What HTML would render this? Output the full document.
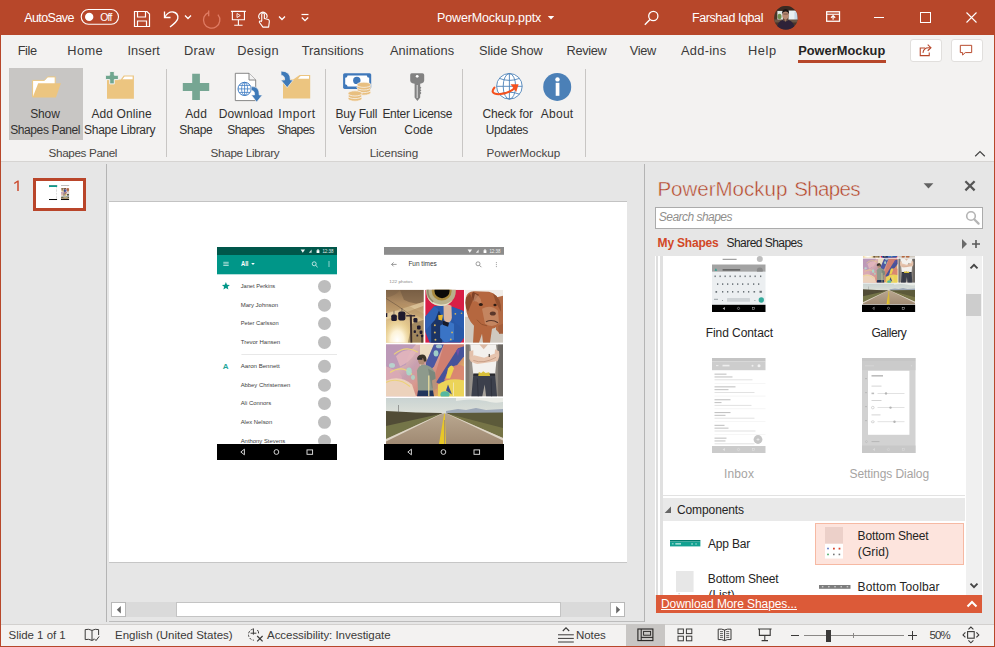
<!DOCTYPE html>
<html><head><meta charset="utf-8"><title>PowerMockup.pptx - PowerPoint</title>
<style>
html,body{margin:0;padding:0;}
body{width:995px;height:647px;overflow:hidden;position:relative;background:#e6e6e6;font-family:"Liberation Sans",sans-serif;}
.a{position:absolute;}
.t{position:absolute;white-space:nowrap;font-family:"Liberation Sans",sans-serif;}
svg{position:absolute;overflow:visible;}
#titlebar{left:0;top:0;width:995px;height:35px;background:#b7472a;}
#tabs{left:0;top:35px;width:995px;height:31px;background:#f3f2f1;}
#ribbon{left:0;top:66px;width:995px;height:95px;background:#f3f2f1;border-bottom:1px solid #d6d4d2;}
#status{left:0;top:624px;width:995px;height:22px;background:#f3f2f1;border-top:1px solid #d2d0ce;}
.sep{width:1px;background:#c8c6c4;top:69px;height:88px;}
#leftpane{left:0;top:162px;width:106px;height:461px;background:#e6e6e6;}
#slide{left:109px;top:201px;width:518px;height:360px;background:#fff;border-top:1px solid #c3c3c3;border-bottom:1px solid #c6c6c6;}
.frame{border-left:1px solid #b7472a;border-right:1px solid #b7472a;border-bottom:1px solid #b7472a;left:0;top:0;width:993px;height:646px;pointer-events:none;}

</style></head>
<body>
<svg width="0" height="0" style="position:absolute;left:0;top:0;">
<defs>
<linearGradient id="gSky" x1="0" y1="0" x2="0" y2="1">
 <stop offset="0" stop-color="#86694a"/><stop offset="0.3" stop-color="#b8946a"/><stop offset="0.6" stop-color="#dcc08c"/><stop offset="1" stop-color="#d8b87c"/>
</linearGradient>
<radialGradient id="gSun" cx="0.3" cy="0.95" r="0.5">
 <stop offset="0" stop-color="#ffffff"/><stop offset="0.35" stop-color="#fff6dc" stop-opacity="0.95"/><stop offset="0.7" stop-color="#f3dc9a" stop-opacity="0.5"/><stop offset="1" stop-color="#d8b578" stop-opacity="0"/>
</radialGradient>
<linearGradient id="gRoadSky" x1="0" y1="0" x2="0" y2="1">
 <stop offset="0" stop-color="#c9d3d2"/><stop offset="0.5" stop-color="#e6e6dc"/><stop offset="1" stop-color="#f3f0e6"/>
</linearGradient>
<linearGradient id="gRoad" x1="0" y1="0" x2="0" y2="1">
 <stop offset="0" stop-color="#b9a78f"/><stop offset="1" stop-color="#a08a73"/>
</linearGradient>
<linearGradient id="gGraf" x1="0" y1="0" x2="1" y2="0.6">
 <stop offset="0" stop-color="#c7a0b6"/><stop offset="0.3" stop-color="#dcb4b4"/><stop offset="0.45" stop-color="#c79fb0"/><stop offset="0.6" stop-color="#d99a90"/><stop offset="0.8" stop-color="#cf8272"/><stop offset="1" stop-color="#e6c85a"/>
</linearGradient>
<linearGradient id="gWall" x1="0" y1="0" x2="1" y2="0">
 <stop offset="0" stop-color="#8f8a84"/><stop offset="0.5" stop-color="#a8a39c"/><stop offset="1" stop-color="#77726c"/>
</linearGradient>

<!-- photo 1 : sky ride -->
<symbol id="ph1" viewBox="0 0 38 53" preserveAspectRatio="none">
 <rect width="38" height="53" fill="url(#gSky)"/>
 <path d="M14 0 L38 0 L38 12 Q28 16 18 10 Z" fill="#6e5540" opacity="0.55"/>
 <path d="M0 0 L14 0 Q10 6 0 8 Z" fill="#7b6148" opacity="0.5"/>
 <path d="M0 24 L38 12 L38 16 L0 30 Z" fill="#f3e2b8" opacity="0.55"/>
 <path d="M0 14 Q16 10 30 20 L38 24 L38 30 Q20 18 0 22 Z" fill="#b08c5c" opacity="0.35"/>
 <rect width="38" height="53" fill="url(#gSun)"/>
 <path d="M26 34 L38 30 L38 53 L22 53 Z" fill="#5a4630" opacity="0.45"/>
 <path d="M0 8.6 L12 16.2 L24.5 25" stroke="#4a3a30" stroke-width="0.4" fill="none"/>
 <path d="M23.9 25 L26 25 L26.4 53 L24.6 53 Z" fill="#3b2c2a"/>
 <rect x="20.3" y="25.3" width="9" height="1.4" fill="#2e2430"/>
 <rect x="35.6" y="45.5" width="1.3" height="7.5" fill="#3b2c2a"/>
 <g fill="#1f1a2e">
  <rect x="0" y="23.2" width="1.3" height="4" rx="0.5"/>
  <rect x="5.3" y="24.8" width="5.6" height="6.4" rx="1.6"/>
  <rect x="12.3" y="21.8" width="7.2" height="8.8" rx="2"/>
  <rect x="27.6" y="28.2" width="4" height="4.6" rx="1.2"/>
  <rect x="31.2" y="35.6" width="3.6" height="4.2" rx="1.1"/>
  <rect x="27.8" y="40.4" width="2.3" height="2.8" rx="0.8"/>
  <rect x="33.8" y="40.8" width="2.8" height="3.4" rx="0.9"/>
  <rect x="35.2" y="44.8" width="2.2" height="2.6" rx="0.7"/>
  <rect x="30.6" y="44.6" width="1.8" height="2.2" rx="0.6"/>
 </g>
 <path d="M8 21 V25 M16 18.5 V22" stroke="#2a2230" stroke-width="0.5"/>
</symbol>

<!-- photo 2 : trumpet -->
<symbol id="ph2" viewBox="0 0 39 53" preserveAspectRatio="none">
 <rect width="39" height="53" fill="#d81f46"/>
 <path d="M0 27 L9 16.5 L18 15.5 L27 17 L39 21.5 L39 48 L35.5 53 L4.6 53 L0 42 Z" fill="#2959a8"/>
 <path d="M6 24 L13 19 L18 30 L17 53 L6 53 Z" fill="#1b3466"/>
 <path d="M0 27 L9 16.5 L14 20 L10 30 L0 41 Z" fill="#2f62b4"/>
 <path d="M15 36 L22 31 L29 34 L29 50 L20 53 L15 48 Z" fill="#3a74c6"/>
 <path d="M27 17 L39 21.5 L39 40 L30 33 L26 24 Z" fill="#2a5cae"/>
 <path d="M13 25.4 L17.8 25 L17 30.8 L13.4 30 Z" fill="#e8b830"/>
 <path d="M18.4 15.4 Q22.5 13 26.4 16 L26.8 28 Q26 33 22 33 Q18.6 32 18.6 27 Z" fill="#dcb7a0"/>
 <path d="M18 31 L24 33 L23 37 L17.5 35 Z" fill="#161a2a"/>
 <circle cx="15.8" cy="1.2" r="15" fill="#b8b08c"/>
 <path d="M1.6 6 A15 15 0 0 0 28 10 A17 17 0 0 1 1.6 6Z" fill="#ebe7cf" opacity="0.85"/>
 <path d="M3 -2 A14 14 0 0 0 8 12" stroke="#7c775c" stroke-width="1.6" fill="none" opacity="0.7"/>
 <ellipse cx="16.6" cy="1.3" rx="10" ry="9.4" fill="#a98a3e"/>
 <ellipse cx="16.9" cy="1.2" rx="7.6" ry="7.2" fill="#0b0a08"/>
 <g fill="#d9b55a"><circle cx="9.7" cy="35.5" r="1"/><circle cx="9.7" cy="42.6" r="1"/><circle cx="10.3" cy="50" r="1"/><circle cx="30.3" cy="24" r="0.9"/><circle cx="27" cy="42.6" r="0.9"/><circle cx="25.7" cy="49.6" r="0.9"/><circle cx="36.5" cy="23.5" r="0.8"/></g>
</symbol>

<!-- photo 3 : dog -->
<symbol id="ph3" viewBox="0 0 38 53" preserveAspectRatio="none">
 <rect width="38" height="53" fill="#f1ede8"/>
 <rect y="27" width="38" height="26" fill="#cfc9c0"/>
 <path d="M30 8 L38 6 L38 40 L35 44 L31 40 Z" fill="#b26a44"/>
 <path d="M33 36 L38 34 L38 44 L34 44 Z" fill="#a55f3c"/>
 <path d="M1 8 Q2 1 10 1.5 L24 2 Q33 4 35 14 L35 28 Q34 38 27 39 L25 53 L18 53 L17 44 L14 53 L8 53 L9 36 Q1 28 1 16 Z" fill="#b5673f"/>
 <path d="M1 8 Q-1 16 3 22 L8 10 L5 4 Z" fill="#8d4a2b"/>
 <path d="M8 2 Q5 6 9 12 L14 5 Z" fill="#7e4126"/>
 <path d="M28 4 Q37 8 36 22 L31 13 Z" fill="#93502f"/>
 <path d="M17 19 Q26 14 33 21 L34 33 Q28 39 20 34 Z" fill="#c48560"/>
 <path d="M10 4 Q18 8 16 16 Q12 10 8 12 Z" fill="#c98f6c" opacity="0.7"/>
 <ellipse cx="27.8" cy="23.6" rx="3" ry="2" fill="#5a372a"/>
 <ellipse cx="15.8" cy="14.6" rx="2" ry="1.5" fill="#2f1d14"/><ellipse cx="30" cy="15.2" rx="1.6" ry="1.3" fill="#2f1d14"/>
 <path d="M21 32 Q27 29 33 33" stroke="#5a372a" stroke-width="1.1" fill="none"/>
 <path d="M12 30 Q16 36 22 36" stroke="#94522f" stroke-width="1" fill="none"/>
</symbol>

<!-- photo 4 : graffiti -->
<symbol id="ph4" viewBox="0 0 78 52" preserveAspectRatio="none">
 <rect width="78" height="52" fill="url(#gGraf)"/>
 <path d="M0 0 L30 0 Q22 8 20 20 L8 26 L0 22 Z" fill="#b896b8" opacity="0.85"/>
 <path d="M0 22 L10 26 Q18 30 16 40 L0 44 Z" fill="#d9a8b4" opacity="0.9"/>
 <path d="M0 36 Q14 30 26 40 L30 52 L0 52 Z" fill="#ecd2bc"/>
 <path d="M10 12 Q20 2 30 8 Q24 18 14 22 Z" fill="#e2b6bc" opacity="0.9"/>
 <path d="M8 10 Q20 0 32 8 M4 28 Q16 20 26 30 M0 38 Q12 32 24 42" stroke="#ecd27a" stroke-width="1.2" fill="none"/>
 <path d="M34 0 L48 0 L42 14 L34 22 Z" fill="#efe3c4" opacity="0.9"/>
 <path d="M48 0 L58 0 L48 22 L40 30 L40 18 Z" fill="#4b58a2"/>
 <path d="M58 0 L78 0 L78 10 L62 30 L52 40 L48 34 Z" fill="#cf7f70"/>
 <path d="M72 4 L78 2 L78 12 L56 40 L50 38 Z" fill="#46539a"/>
 <path d="M62 26 Q70 18 78 22 L78 36 L58 36 Z" fill="#d98672" opacity="0.95"/>
 <path d="M62 24 Q66 18 68 24 L64 34 L60 34 Z" fill="#ecd24e"/>
 <path d="M52 40 Q64 32 78 36 L78 52 L52 52 Z" fill="#ecd458"/>
 <path d="M62 40 L66 50 L60 46 Z" fill="#3b4a8a"/>
 <ellipse cx="59" cy="50" rx="4.6" ry="3.4" fill="#55b8a0"/>
 <ellipse cx="23" cy="27" rx="2.8" ry="4" fill="#a9dccb" opacity="0.9"/><ellipse cx="6" cy="21" rx="3" ry="2.4" fill="#b7e0d2" opacity="0.8"/><ellipse cx="27" cy="33" rx="2" ry="2.4" fill="#a9dccb" opacity="0.8"/>
 <ellipse cx="50" cy="9" rx="2.4" ry="3.2" fill="#a9dccb" opacity="0.9"/><ellipse cx="53" cy="2" rx="3" ry="2" fill="#b7e0d2" opacity="0.8"/>
 <path d="M70 6 L74 4 L72 12 Z" fill="#7a4ea8" opacity="0.8"/>
 <!-- man -->
 <path d="M31 26 Q33 20 38 20 Q46 21 49 28 L50 40 L47 47 L32 47 Z" fill="#8e9a8c"/>
 <path d="M42 24 L49 28 L50 40 L46 44 Z" fill="#7b877c"/>
 <path d="M46 36 L50 34 L51 44 L47 46 Z" fill="#b9937c"/>
 <ellipse cx="35.6" cy="15.6" rx="3.6" ry="4.8" fill="#b08a72"/>
 <path d="M31.2 13.4 Q33 9.6 38 10.4 Q41 12 40.4 17 L38 17 L37 13.6 L31.4 15 Z" fill="#3a3428"/>
 <rect x="31.4" y="13.6" width="5" height="1.8" fill="#2b2a2c"/>
 <path d="M32 46 L47 46 L48 52 L31 52 Z" fill="#22355c"/>
 <rect x="42.2" y="31" width="1.2" height="21" fill="#efe2a0"/><rect x="67" y="38" width="0.9" height="14" fill="#f3e7b6"/>
</symbol>

<!-- photo 5 : man crossed arms -->
<symbol id="ph5" viewBox="0 0 38 52" preserveAspectRatio="none">
 <rect width="38" height="52" fill="url(#gWall)"/>
 <path d="M0 0 H4 V52 H0 Z" fill="#6f6a66" opacity="0.6"/><path d="M33 0 H38 V52 H33 Z" fill="#5f5b58" opacity="0.55"/>
 <path d="M5 0 L31 0 L32 10 L30 30 L8 30 L6 12 Z" fill="#f3f1ee"/>
 <path d="M14 0 L18.5 5 L23 0 Z" fill="#dcbba6"/>
 <path d="M4 7 L8 6 L8 18 Q5 18 4 14 Z" fill="#e3c0aa"/><path d="M30 5 L34 7 Q35 14 32 17 L29 16 Z" fill="#e3c0aa"/>
 <path d="M5 13 Q6 19 12 19.6 L30 17 Q34 15 33 10 L29 9.4 L19 13.4 L9 11 Z" fill="#e6c4ae"/>
 <path d="M8 16 Q18 20 31 13" stroke="#c59c84" stroke-width="0.9" fill="none"/>
 <rect x="23.5" y="9.6" width="1.2" height="3" fill="#4a4038"/>
 <path d="M8 30 L30 30 L32 52 L21 52 L19.5 40 L17 52 L6 52 Z" fill="#3c404c"/>
 <path d="M12 34 L13 52 M26 34 L26.5 52" stroke="#2c2f3a" stroke-width="0.8"/>
 <rect x="8" y="29" width="22" height="2.2" fill="#2a2a2e"/>
 <path d="M13.5 27.6 L16 28.6 L18 26.8 L20.5 28.6 L24 27.8 L25 31.4 L13 31.4 Z" fill="#d8c03a"/>
</symbol>

<!-- photo 6 : road -->
<symbol id="ph6" viewBox="0 0 117 46" preserveAspectRatio="none">
 <rect width="117" height="46" fill="url(#gRoadSky)"/>
 <path d="M60 13 L72 11 L80 12 L90 10 L100 12 L117 11 L117 16 L60 16 Z" fill="#8e9bb0" opacity="0.8"/>
 <path d="M70 3 Q85 0 100 3 Q108 6 117 4 L117 0 L70 0Z" fill="#f7f5ee" opacity="0.7"/>
 <path d="M0 13 L30 14.5 L56 15 L56 16 L0 40 Z" fill="#514c36"/>
 <path d="M117 14.5 L61 15 L61 16 L117 40 Z" fill="#5c5a3a"/>
 <path d="M0 28 L54 16 L56 16 L0 44 Z" fill="#747548"/>
 <path d="M117 30 L63 16 L61 16 L117 40 Z" fill="#7d7a4a" opacity="0.8"/>
 <path d="M56 15.5 L61 15.5 L117 40 L117 46 L0 46 L0 41 Z" fill="url(#gRoad)"/>
 <path d="M0 41 L56 15.5 L56.6 15.5 L0 43.4 Z" fill="#e8e2d4" opacity="0.85"/>
 <path d="M117 40 L61 15.5 L60.4 15.5 L117 42.4 Z" fill="#e8e2d4" opacity="0.85"/>
 <path d="M58.2 15.5 L58.8 15.5 L60 46 L53 46 Z" fill="#e8c728"/>
 <path d="M58.5 22 L58.5 46" stroke="#a08a73" stroke-width="0.8"/>
 <rect x="12" y="7" width="0.5" height="8" fill="#555"/>
</symbol>

<!-- nav bar icons -->
<symbol id="nav" viewBox="0 0 120 16" preserveAspectRatio="none">
 <rect width="120" height="16" fill="#000"/>
 <path d="M27.4 5.2 L27.4 10.8 L23.8 8 Z" fill="none" stroke="#e8e8e8" stroke-width="0.9" stroke-linejoin="round"/>
 <circle cx="59.4" cy="8" r="2.4" fill="none" stroke="#e8e8e8" stroke-width="0.9"/>
 <rect x="90" y="5.9" width="5.6" height="4.4" fill="none" stroke="#e8e8e8" stroke-width="0.9"/>
</symbol>

<!-- status icons -->
<symbol id="sticons" viewBox="0 0 40 8">
 <path d="M3.6 2.4 L8 2.4 L5.8 5.8 Z" fill="#fff" opacity="0.95"/>
 <path d="M11.8 5.8 L14.6 5.8 L14.6 2.6 Z" fill="#fff" opacity="0.8"/>
 <rect x="19.6" y="3.2" width="2.8" height="2.8" fill="#fff"/><rect x="20.3" y="2.3" width="1.4" height="1" fill="#fff"/>
 <text x="25.4" y="6.1" font-family="Liberation Sans, sans-serif" font-size="4.9" fill="#fff" opacity="0.9" textLength="11" lengthAdjust="spacingAndGlyphs">12:38</text>
</symbol>

<!-- PHONE 1 : contacts -->
<symbol id="phone1" viewBox="0 0 120 213" preserveAspectRatio="none">
 <rect width="120" height="213" fill="#fff"/>
 <g font-family="Liberation Sans, sans-serif" font-size="5.3" fill="#3c3c3c">
  <text x="23.7" y="40.7" textLength="34.5" lengthAdjust="spacingAndGlyphs">Janet Perkins</text>
  <text x="23.7" y="59.5" textLength="37.5" lengthAdjust="spacingAndGlyphs">Mary Johnson</text>
  <text x="23.7" y="77.8" textLength="38" lengthAdjust="spacingAndGlyphs">Peter Carlsson</text>
  <text x="23.7" y="96.7" textLength="39.5" lengthAdjust="spacingAndGlyphs">Trevor Hansen</text>
  <text x="23.7" y="120.7" textLength="39" lengthAdjust="spacingAndGlyphs">Aaron Bennett</text>
  <text x="23.7" y="139.5" textLength="49.5" lengthAdjust="spacingAndGlyphs">Abbey Christensen</text>
  <text x="23.7" y="157.6" textLength="30.5" lengthAdjust="spacingAndGlyphs">Ali Connors</text>
  <text x="23.7" y="176.6" textLength="31.5" lengthAdjust="spacingAndGlyphs">Alex Nelson</text>
  <text x="23.7" y="196.1" textLength="44.5" lengthAdjust="spacingAndGlyphs">Anthony Stevens</text>
 </g>
 <g fill="#bdbdbd">
  <circle cx="107.5" cy="39.4" r="6.5"/><circle cx="107.5" cy="58.2" r="6.5"/><circle cx="107.5" cy="76.5" r="6.5"/><circle cx="107.5" cy="95.4" r="6.5"/>
  <circle cx="107.5" cy="119.3" r="6.5"/><circle cx="107.5" cy="138.2" r="6.5"/><circle cx="107.5" cy="156.4" r="6.5"/><circle cx="107.5" cy="175.3" r="6.5"/><circle cx="107.5" cy="194.1" r="6.5"/>
 </g>
 <rect x="24.4" y="107" width="95.6" height="0.7" fill="#dedede"/>
 <path d="M8.9 35 L10 37.7 L12.9 37.9 L10.7 39.8 L11.4 42.6 L8.9 41.1 L6.4 42.6 L7.1 39.8 L4.9 37.9 L7.8 37.7 Z" fill="#009688"/>
 <text x="5.8" y="122" font-family="Liberation Sans, sans-serif" font-size="8" font-weight="700" fill="#26a69a">A</text>
 <rect width="120" height="8" fill="#00574b"/>
 <rect y="8" width="120" height="19.3" fill="#009688"/>
 <use href="#sticons" x="80" y="0" width="40" height="8"/>
 <path d="M6.3 15.3 h5.4 M6.3 16.9 h5.4 M6.3 18.5 h5.4" stroke="#c9ebe6" stroke-width="0.8"/>
 <text x="24" y="19.2" font-family="Liberation Sans, sans-serif" font-size="7" font-weight="700" fill="#fff" textLength="7.4" lengthAdjust="spacingAndGlyphs">All</text>
 <path d="M34.2 16 L37.8 16 L36 17.9 Z" fill="#fff"/>
 <circle cx="97.2" cy="16.8" r="2" fill="none" stroke="#e3f4f2" stroke-width="0.8"/><path d="M98.7 18.3 L100.6 20.2" stroke="#e3f4f2" stroke-width="0.9"/>
 <path d="M112 14.4 v1.1 M112 16.4 v1.1 M112 18.4 v1.1" stroke="#f2fbfa" stroke-width="1.2"/>
 <use href="#nav" x="0" y="197" width="120" height="16"/>
</symbol>

<!-- PHONE 2 : gallery -->
<symbol id="phone2" viewBox="0 0 120 213" preserveAspectRatio="none">
 <rect width="120" height="213" fill="#fff"/>
 <rect width="120" height="7.8" fill="#8c8c8c"/>
 <use href="#sticons" x="80" y="0" width="40" height="8"/>
 <path d="M7.6 17.4 h5 M7.6 17.4 l2 -2 M7.6 17.4 l2 2" stroke="#6e6e6e" stroke-width="0.7" fill="none"/>
 <text x="24.4" y="19.2" font-family="Liberation Sans, sans-serif" font-size="6.4" fill="#3a3a3a" textLength="28.4" lengthAdjust="spacingAndGlyphs">Fun times</text>
 <circle cx="94" cy="16.8" r="2" fill="none" stroke="#777" stroke-width="0.7"/><path d="M95.5 18.3 L97.4 20.2" stroke="#777" stroke-width="0.8"/>
 <path d="M112.4 15.2 v0.9 M112.4 17.2 v0.9 M112.4 19.2 v0.9" stroke="#777" stroke-width="0.8"/>
 <text x="5.3" y="35.6" font-family="Liberation Sans, sans-serif" font-size="4.4" fill="#8a8a8a" textLength="23.3" lengthAdjust="spacingAndGlyphs">122 photos</text>
 <use href="#ph1" x="2" y="42.8" width="37.8" height="53"/>
 <use href="#ph2" x="41.2" y="42.8" width="38.8" height="53"/>
 <use href="#ph3" x="81" y="42.8" width="38" height="53"/>
 <use href="#ph4" x="2" y="97.3" width="78" height="52.3"/>
 <use href="#ph5" x="81.4" y="97.3" width="37.6" height="52.3"/>
 <use href="#ph6" x="2" y="151" width="117" height="46"/>
 <use href="#nav" x="0" y="197" width="120" height="16"/>
</symbol>
</defs>
</svg>

<div class="a" id="titlebar"></div>
<div class="a" id="tabs"></div>
<div class="a" id="ribbon"></div>
<div class="a" id="leftpane"></div>
<div class="a" id="status"></div>

<!-- ===== TITLE BAR ICONS ===== -->
<!-- autosave toggle -->
<svg style="left:80px;top:8px;" width="40" height="18" viewBox="0 0 40 18"><rect x="1.2" y="1.5" width="37.3" height="14.7" rx="7.35" fill="none" stroke="#fff" stroke-width="1.1"/><circle cx="9.2" cy="8.9" r="4.2" fill="#fff"/></svg>
<!-- save -->
<svg style="left:133px;top:10px;" width="18" height="18" viewBox="0 0 18 18"><path d="M1.5 1.5 H14 L16.5 4 V16.5 H1.5 Z M4.5 1.5 V7 H12.5 V1.5 M4.5 16.5 V11 H13.5 V16.5" fill="none" stroke="#fff" stroke-width="1.2"/></svg>
<!-- undo -->
<svg style="left:162px;top:9px;" width="20" height="20" viewBox="0 0 20 20"><path d="M2.5 2.5 V8.5 H8.5" fill="none" stroke="#fff" stroke-width="1.3"/><path d="M2.8 8.3 Q6 2.5 11 3 Q16.5 4 15.8 9.5 Q15.2 12.5 8 18" fill="none" stroke="#fff" stroke-width="1.3"/></svg>
<svg style="left:184px;top:14px;" width="8" height="6"><path d="M1 1.5 L4 4.5 L7 1.5" fill="none" stroke="#fff" stroke-width="1.3"/></svg>
<!-- redo (disabled) -->
<svg style="left:200.6px;top:8.6px;" width="20" height="20" viewBox="0 0 20 20"><path d="M7.8 3.3 A8.2 8.2 0 1 0 16.9 5.7" fill="none" stroke="#e07c64" stroke-width="1.3"/><path d="M7.7 1.4 V7.2" stroke="#e07c64" stroke-width="1.3"/></svg>
<!-- present -->
<svg style="left:230.4px;top:9.4px;" width="16.8" height="18.6" viewBox="0 0 18 20"><path d="M1 2.5 H17 M2.5 2.5 V11.5 H15.5 V2.5 M9 11.5 V17.5 M4.5 17.5 H13.5" fill="none" stroke="#fff" stroke-width="1.2"/><path d="M7.5 4.8 L11 7 L7.5 9.2 Z" fill="none" stroke="#fff" stroke-width="0.9"/></svg>
<!-- touch -->
<svg style="left:255.8px;top:8.6px;" width="16.7" height="20.4" viewBox="0 0 18 22"><path d="M6.2 13 V5.6 Q6.2 4.2 7.6 4.2 Q9 4.2 9 5.6 V10.2 L13.2 11.4 Q14.6 12 14.4 13.6 L13.6 19.5 H7.5 L3.8 14.6 Q3.2 13.4 4.4 13 Q5.2 12.8 6.2 14" fill="none" stroke="#fff" stroke-width="1.2" stroke-linejoin="round"/><path d="M4 10.6 A4.4 4.4 0 1 1 11.4 9.8" fill="none" stroke="#fff" stroke-width="1.2"/></svg>
<svg style="left:277.5px;top:14.5px;" width="8" height="6"><path d="M1 1.5 L4 4.5 L7 1.5" fill="none" stroke="#fff" stroke-width="1.3"/></svg>
<!-- customize QAT -->
<svg style="left:300px;top:13.2px;" width="10" height="10"><path d="M1.5 1.5 H8.5" stroke="#fff" stroke-width="1.2"/><path d="M1.8 4.5 L5 7.7 L8.2 4.5" fill="none" stroke="#fff" stroke-width="1.3"/></svg>
<!-- title caret -->
<svg style="left:547px;top:15px;" width="8" height="6"><path d="M0.8 1 H7.2 L4 4.6 Z" fill="#fff"/></svg>
<!-- search -->
<svg style="left:643px;top:9px;" width="18" height="18" viewBox="0 0 18 18"><circle cx="10.3" cy="7" r="4.6" fill="none" stroke="#fff" stroke-width="1.3"/><path d="M7 10.5 L1.8 15.8" stroke="#fff" stroke-width="1.4"/></svg>
<!-- avatar -->
<svg style="left:774px;top:6.2px;" width="23.8" height="23.8" viewBox="0 0 24 24"><defs><clipPath id="avc"><circle cx="12" cy="12" r="11.9"/></clipPath></defs>
 <g clip-path="url(#avc)"><rect width="24" height="24" fill="#4a3528"/><rect x="0" y="0" width="24" height="4.5" fill="#3a2a22"/>
 <rect x="3.4" y="5" width="5.6" height="9.6" fill="#dfe8e6"/><rect x="14.6" y="4.6" width="8" height="10" fill="#e9eff2"/><rect x="20.6" y="6" width="3.4" height="8" fill="#c8d6e4"/>
 <ellipse cx="5.6" cy="10.6" rx="2" ry="2.8" fill="#6f8e4e"/><rect x="0" y="13.6" width="24" height="3" fill="#6a5646"/>
 <ellipse cx="11.6" cy="9" rx="3.3" ry="4.3" fill="#b98a72"/><path d="M8.2 8 Q8 3.2 11.8 3 Q15.4 3.2 15 8 Q13.6 5.4 11.6 5.6 Q9.4 5.6 8.2 8Z" fill="#1a1414"/>
 <rect x="9.4" y="7.6" width="4.4" height="1" fill="#5a4038" opacity="0.7"/>
 <path d="M2.6 24 Q3 15.6 8.6 14 L11.6 15.8 L14.6 14 Q20.6 15.6 21.4 24 Z" fill="#2e2238"/><path d="M10.4 13 L11.6 15.8 L12.8 13 Z" fill="#a87a64"/></g></svg>
<!-- ribbon display -->
<svg style="left:825.6px;top:11.4px;" width="14.2" height="11" viewBox="0 0 17 13"><rect x="0.8" y="0.8" width="15.4" height="11.4" fill="none" stroke="#fff" stroke-width="1.5"/><path d="M0.8 3.8 H16.2" stroke="#fff" stroke-width="1.3"/><path d="M8.5 10.4 V5.8 M6 8 L8.5 5.5 L11 8" fill="none" stroke="#fff" stroke-width="1.4"/></svg>
<!-- window buttons -->
<div class="a" style="left:874px;top:17px;width:10px;height:1px;background:#fff;"></div>
<div class="a" style="left:920px;top:12px;width:9px;height:9px;border:1px solid #fff;"></div>
<svg style="left:966px;top:12px;" width="11" height="11"><path d="M0.5 0.5 L10.5 10.5 M10.5 0.5 L0.5 10.5" stroke="#fff" stroke-width="1.1"/></svg>


<!-- ===== TABS ===== -->
<div class="a" style="left:798px;top:60px;width:88px;height:3px;background:#b7472a;"></div>
<div class="a" style="left:910px;top:38.5px;width:30px;height:21px;background:#fff;border:1px solid #e1dfdd;border-radius:3px;"></div>
<div class="a" style="left:950.5px;top:38.5px;width:30px;height:21px;background:#fff;border:1px solid #e1dfdd;border-radius:3px;"></div>
<svg style="left:918px;top:42.6px;" width="15.3" height="14.4" viewBox="0 0 17 16"><path d="M8 5.5 H2.5 V14 H12.5 V10.5" fill="none" stroke="#b7472a" stroke-width="1.2"/><path d="M5.5 11 Q6 5.2 12 5.2 H14" fill="none" stroke="#b7472a" stroke-width="1.2"/><path d="M10.8 1.8 L14.4 5.2 L10.8 8.6" fill="none" stroke="#b7472a" stroke-width="1.2"/></svg>
<svg style="left:959px;top:43.6px;" width="14" height="12.4" viewBox="0 0 17 15"><path d="M1.6 1.6 H15.4 V10.4 H7.6 L4.4 13.4 V10.4 H1.6 Z" fill="none" stroke="#b7472a" stroke-width="1.2" stroke-linejoin="miter"/></svg>


<!-- ===== RIBBON ===== -->
<div class="a" style="left:9px;top:68px;width:74px;height:72px;background:#c8c6c4;"></div>
<div class="a sep" style="left:166px;"></div>
<div class="a sep" style="left:325px;"></div>
<div class="a sep" style="left:462px;"></div>
<div class="a sep" style="left:585px;"></div>
<!-- open folder -->
<svg style="left:32px;top:75.5px;" width="30" height="23" viewBox="0 0 30 23"><path d="M0.6 21 V4.4 H12.4 L15.6 0.9 H23.2 V8.4" fill="#fff" stroke="#ecc781" stroke-width="1"/><path d="M6.2 7.3 H28.9 L23.9 21.6 H0.6 Z" fill="#ecc580"/></svg>
<!-- add folder -->
<svg style="left:104px;top:70px;" width="32" height="30" viewBox="0 0 32 30"><path d="M3 9.6 H16.8 L19.8 5.6 H29.9 V28.7 H3 Z" fill="#ecc580"/><path d="M18.4 9.2 L20.6 6.6 H28.6 V9.2 Z" fill="#fff"/>
 <path d="M5.7 1.4 H10.3 V5.2 H14.4 V9.6 H10.3 V13.9 H5.7 V9.6 H1.4 V5.2 H5.7 Z" fill="#6fa68f" stroke="#f3f2f1" stroke-width="1"/></svg>
<!-- plus -->
<svg style="left:182px;top:73px;" width="28" height="28" viewBox="0 0 28 28"><path d="M10.2 0.8 H17.9 V10 H27.2 V17.9 H17.9 V26.9 H10.2 V17.9 H0.8 V10 H10.2 Z" fill="#76a693"/></svg>
<!-- download doc -->
<svg style="left:234px;top:72px;" width="30" height="32" viewBox="0 0 30 32"><path d="M1.3 1.3 H15 L21.7 8 V28.6 H1.3 Z" fill="#fff" stroke="#7a7a7a" stroke-width="0.9"/><path d="M15 1.3 V8 H21.7" fill="#f3f3f3" stroke="#7a7a7a" stroke-width="0.9"/>
 <g fill="none" stroke="#3d7cc4" stroke-width="0.8"><circle cx="10.6" cy="16.9" r="6.6" fill="#fff" stroke-width="1"/><ellipse cx="10.6" cy="16.9" rx="3" ry="6.5"/><path d="M10.6 10.4 V23.4 M4.1 16.9 H17.1 M5.2 13.4 H16 M5.2 20.4 H16"/></g>
 <path d="M17.2 14.6 Q25.6 14 25.2 23 L28.3 23 L22.7 30 L17.4 23 L20.6 23 Q21 18.4 17.2 18.6 Z" fill="#3f7ab8" stroke="#f3f2f1" stroke-width="0.6"/></svg>
<!-- import folder -->
<svg style="left:279px;top:70px;" width="33" height="30" viewBox="0 0 33 30"><path d="M4 9.3 H14.6 L20.6 5 H31.2 V28.5 H4 Z" fill="#ecc580"/><path d="M19 8.8 L21.6 6 H30 V8.8 Z" fill="#fff"/>
 <path d="M2 1 Q11.6 1.2 11.4 10 L14.2 10 L8.2 17.6 L1.8 10 L5.6 10 Q6 5.6 2 5.2 Z" fill="#3f7ab8" stroke="#f3f2f1" stroke-width="0.7"/></svg>
<!-- money -->
<svg style="left:342px;top:72px;" width="31" height="30" viewBox="0 0 31 30"><rect x="1.1" y="1.2" width="28.1" height="15.7" rx="1.6" fill="#3f78ba"/><path d="M5.6 3.4 H24.8 Q25 5.6 27.2 5.8 V12.2 Q25 12.4 24.8 14.6 H5.6 Q5.4 12.4 3.2 12.2 V5.8 Q5.4 5.6 5.6 3.4 Z" fill="#fff"/><circle cx="14.8" cy="8.4" r="3.7" fill="#3f78ba"/>
 <g fill="#e8bf80" stroke="#f7f3ec" stroke-width="0.8"><ellipse cx="21.9" cy="20.6" rx="7" ry="2.6"/><ellipse cx="21.9" cy="18" rx="7" ry="2.6"/><ellipse cx="21.9" cy="15.4" rx="7" ry="2.6"/><ellipse cx="21.9" cy="12.8" rx="7" ry="2.6"/>
 <ellipse cx="13" cy="26.6" rx="7" ry="2.6"/><ellipse cx="13" cy="24" rx="7" ry="2.6"/><ellipse cx="13" cy="21.4" rx="7" ry="2.6"/></g></svg>
<!-- key -->
<svg style="left:409px;top:72px;" width="17" height="30" viewBox="0 0 17 30"><path d="M2.6 1.2 H13.4 Q15.2 1.2 15.2 3 V8.6 Q15.2 10.6 13 11.2 L11.2 11.8 V14.6 L12.4 15.8 L11.2 17 L12.4 18.4 L11.2 19.6 L12.4 21 L11.2 22.4 V25.6 L8.4 29 L5.6 25.6 V11.8 L3.4 11.2 Q1.2 10.6 1.2 8.6 V3 Q1.2 1.2 2.6 1.2 Z" fill="#828282"/><circle cx="8.2" cy="4.3" r="1.4" fill="#fff"/><path d="M8.2 13 V26" stroke="#ededed" stroke-width="0.9"/></svg>
<!-- globe update -->
<svg style="left:490px;top:71px;" width="34" height="30" viewBox="0 0 34 30"><g fill="none" stroke="#4d82b8" stroke-width="0.9"><circle cx="19.4" cy="15.3" r="12.8" fill="#fff"/><ellipse cx="19.4" cy="15.3" rx="6.2" ry="12.8"/><path d="M19.4 2.5 V28.1 M6.6 15.3 H32.2 M9.4 7.4 Q19.4 11.4 29.4 7.4 M9.4 23.2 Q19.4 19.2 29.4 23.2"/></g>
 <path d="M4.4 16.6 Q-0.6 22.6 8.6 23.2 Q18.6 23 25.4 16.4" fill="none" stroke="#f4511e" stroke-width="2.1" stroke-linecap="round"/><path d="M20.6 13.2 L28.6 13.2 L26.2 21 Z" fill="#f4511e"/></svg>
<!-- info -->
<svg style="left:543px;top:72px;" width="29" height="30" viewBox="0 0 29 30"><circle cx="14.2" cy="14.9" r="14" fill="#4b80b7"/><circle cx="14.5" cy="7.4" r="2.2" fill="#fff"/><rect x="12.7" y="10.8" width="3.7" height="13" fill="#fff"/></svg>
<!-- collapse ribbon -->
<svg style="left:974px;top:150px;" width="12" height="8"><path d="M1.2 6.2 L6 1.6 L10.8 6.2" fill="none" stroke="#444" stroke-width="1.2"/></svg>


<!-- ===== LEFT PANE ===== -->
<div class="a" style="left:106px;top:164px;width:1px;height:458px;background:#b4b4b4;"></div>
<div class="a" style="left:33px;top:178px;width:47px;height:27px;background:#fff;border:3px solid #b9452a;"></div>
<svg style="left:48.9px;top:184.8px;" width="8.4" height="15.2" viewBox="0 0 120 213" preserveAspectRatio="none"><use href="#phone1" width="120" height="213"/></svg>
<svg style="left:60.7px;top:184.8px;" width="8.4" height="15.2" viewBox="0 0 120 213" preserveAspectRatio="none"><use href="#phone2" width="120" height="213"/></svg>
<svg style="left:12px;top:178px;" width="10" height="15" viewBox="0 0 10 15"><path d="M2.3 5.5 L5.9 3 M6 2.6 V12.9" fill="none" stroke="#cc4a2c" stroke-width="1.5"/></svg>


<!-- ===== SLIDE ===== -->
<div class="a" id="slide"></div>
<svg style="left:217px;top:247px;" width="120" height="213"><use href="#phone1" width="120" height="213"/></svg>
<svg style="left:384px;top:247px;" width="120" height="213"><use href="#phone2" width="120" height="213"/></svg>


<!-- ===== H SCROLLBAR ===== -->
<div class="a" style="left:111px;top:602px;width:514px;height:15px;background:#dadada;"></div>
<div class="a" style="left:111px;top:602px;width:13px;height:13px;background:#fff;border:1px solid #b8b8b8;"></div>
<div class="a" style="left:610px;top:602px;width:13px;height:13px;background:#fff;border:1px solid #b8b8b8;"></div>
<div class="a" style="left:176px;top:602px;width:383px;height:13px;background:#fff;border:1px solid #c4c4c4;"></div>
<svg style="left:115px;top:605px;" width="8" height="10"><path d="M5.8 1 V8.6 L1.8 4.8 Z" fill="#666"/></svg>
<svg style="left:614px;top:605px;" width="8" height="10"><path d="M2.2 1 V8.6 L6.2 4.8 Z" fill="#666"/></svg>
<div class="a" style="left:109px;top:621px;width:536px;height:1px;background:#bcbcbc;"></div>


<!-- ===== RIGHT PANE ===== -->
<div class="a" style="left:644px;top:164px;width:1px;height:458px;background:#b4b4b4;"></div>
<!-- header icons -->
<svg style="left:923px;top:182.7px;" width="12" height="8"><path d="M0.6 0.3 L10.4 0.3 L5.5 5.4 Z" fill="#626262"/></svg>
<svg style="left:964px;top:179.6px;" width="12" height="12"><path d="M1.4 1.2 L10.6 10.4 M10.6 1.2 L1.4 10.4" stroke="#555" stroke-width="2.2" fill="none"/></svg>
<!-- search box -->
<div class="a" style="left:655px;top:207px;width:326px;height:20px;background:#fff;border:1px solid #ababab;"></div>
<svg style="left:965px;top:210px;" width="16" height="16"><circle cx="6" cy="6" r="4.3" fill="none" stroke="#b4b4b4" stroke-width="1.6"/><path d="M9.2 9.2 L13.6 13.6" stroke="#b4b4b4" stroke-width="2.2" stroke-linecap="round"/></svg>
<!-- tab arrows -->
<svg style="left:960px;top:237.8px;" width="24" height="12"><path d="M2 1 L2 11 L7 6 Z" fill="#6a6a6a"/><path d="M12 6 h8 M16 2 v8" stroke="#5a5a5a" stroke-width="1.6"/></svg>
<!-- list box -->
<div class="a" style="left:655px;top:256px;width:328px;height:338.5px;background:#fff;overflow:hidden;">
  <div class="a" style="left:1.4px;top:0;width:1.4px;height:339px;background:#dedede;"></div>
  <div class="a" style="left:5.1px;top:0;width:2.5px;height:339px;background:#e0e0e0;"></div>
  <!-- find contact thumb -->
  <svg style="left:56.5px;top:0;" width="53.5" height="56" viewBox="0 0 53.5 56">
    <rect width="53.5" height="56" fill="#fff"/>
    <rect x="10.6" y="2.8" width="14" height="1" fill="#8a8a8a"/><circle cx="47.8" cy="3" r="3" fill="#bdbdbd"/>
    <rect y="8.5" width="53.5" height="7.3" fill="#a3a3a3"/><rect x="10.6" y="13.3" width="17.6" height="1.2" fill="#4e4e4e"/><circle cx="47.8" cy="14.4" r="3" fill="#8a8a8a"/><path d="M2.6 14.8 l1.3 -2.6 l1.3 2.6z" fill="#2a9c8e"/>
    <rect y="15.8" width="53.5" height="33" fill="#eceff1"/>
    <g fill="#6b7378">
      <rect x="2.5" y="19.5" width="1.3" height="1.6"/><rect x="7.5" y="19.5" width="1.3" height="1.6"/><rect x="12.5" y="19.5" width="1.3" height="1.6"/><rect x="17.5" y="19.5" width="1.3" height="1.6"/><rect x="22.5" y="19.5" width="1.3" height="1.6"/><rect x="27.5" y="19.5" width="1.3" height="1.6"/><rect x="32.5" y="19.5" width="1.3" height="1.6"/><rect x="37.5" y="19.5" width="1.3" height="1.6"/><rect x="42.5" y="19.5" width="1.3" height="1.6"/><rect x="48" y="19.5" width="1.3" height="1.6"/>
      <rect x="5" y="27.3" width="1.3" height="1.6"/><rect x="10" y="27.3" width="1.3" height="1.6"/><rect x="15" y="27.3" width="1.3" height="1.6"/><rect x="20" y="27.3" width="1.3" height="1.6"/><rect x="25" y="27.3" width="1.3" height="1.6"/><rect x="30" y="27.3" width="1.3" height="1.6"/><rect x="35.5" y="27.3" width="1.3" height="1.6"/><rect x="41" y="27.3" width="1.3" height="1.6"/><rect x="46" y="27.3" width="1.3" height="1.6"/>
      <rect x="3.5" y="35" width="1.6" height="1.8"/><rect x="10" y="35" width="1.3" height="1.6"/><rect x="15" y="35" width="1.3" height="1.6"/><rect x="20" y="35" width="1.3" height="1.6"/><rect x="25.5" y="35" width="1.3" height="1.6"/><rect x="31" y="35" width="1.3" height="1.6"/><rect x="36" y="35" width="1.3" height="1.6"/><rect x="41.5" y="35" width="1.6" height="1.6"/><rect x="47.5" y="34.8" width="2.4" height="2"/>
    </g>
    <rect x="2" y="42.8" width="4" height="1" fill="#9aa2a6"/><rect x="10" y="44" width="0.8" height="0.8" fill="#6b7378"/>
    <rect x="15" y="42" width="23" height="3.8" rx="0.6" fill="#cfd4d7"/><rect x="42.5" y="44" width="0.8" height="0.8" fill="#6b7378"/>
    <circle cx="49.3" cy="44" r="2.7" fill="#35ab9c"/>
    <rect y="48.8" width="53.5" height="7.2" fill="#000"/>
    <path d="M12.9 50.9 v3 l-2.2 -1.5z" fill="#bbb"/><circle cx="26.5" cy="52.4" r="1.1" fill="none" stroke="#bbb" stroke-width="0.5"/><rect x="40.5" y="51.3" width="2.2" height="2.2" fill="none" stroke="#bbb" stroke-width="0.5"/>
  </svg>
  <!-- gallery thumb -->
  <svg style="left:207.4px;top:0;" width="53.5" height="56" viewBox="0 91.9 120 121.1" preserveAspectRatio="none"><use href="#phone2" width="120" height="213"/></svg>
  <!-- inbox thumb (disabled look) -->
  <svg style="left:56.5px;top:102px;" width="53.5" height="95" viewBox="0 0 53.5 95">
    <rect width="53.5" height="95" fill="#fff"/>
    <rect width="53.5" height="3.4" fill="#c4c4c4"/><rect y="3.4" width="53.5" height="8.8" fill="#cdcdcd"/>
    <rect x="4" y="7.3" width="2.4" height="0.8" fill="#f4f4f4"/><rect x="10.5" y="6.8" width="7" height="1.6" fill="#eee"/><circle cx="40.5" cy="7.8" r="1" fill="#eee"/><circle cx="47" cy="7.8" r="1.5" fill="#f2f2f2"/>
    <g>
      <rect x="2.5" y="15.6" width="12" height="1.1" fill="#c2c2c2"/><rect x="2.5" y="18.4" width="18" height="1.1" fill="#c6c6c6"/><rect x="2.5" y="21.3" width="38" height="1" fill="#e2e2e2"/>
      <rect x="2.5" y="28.3" width="21" height="1.1" fill="#c2c2c2"/><rect x="2.5" y="31.1" width="14" height="1.1" fill="#c6c6c6"/><rect x="2.5" y="34" width="40" height="1" fill="#e2e2e2"/>
      <rect x="2.5" y="41.2" width="16" height="1.1" fill="#c2c2c2"/><rect x="2.5" y="44" width="7" height="1.1" fill="#c6c6c6"/><rect x="2.5" y="46.9" width="37" height="1" fill="#e2e2e2"/>
      <rect x="2.5" y="54" width="16" height="1.1" fill="#c2c2c2"/><rect x="2.5" y="56.8" width="11" height="1.1" fill="#c6c6c6"/><rect x="2.5" y="59.7" width="40" height="1" fill="#e2e2e2"/>
      <rect x="2.5" y="66.8" width="10" height="1.1" fill="#c2c2c2"/><rect x="2.5" y="69.6" width="14" height="1.1" fill="#c6c6c6"/><rect x="2.5" y="72.5" width="41" height="1" fill="#e2e2e2"/>
      <rect x="2.5" y="79.6" width="12" height="1.1" fill="#c2c2c2"/><rect x="2.5" y="82.4" width="11" height="1.1" fill="#c6c6c6"/><rect x="2.5" y="85.3" width="40" height="1" fill="#e2e2e2"/>
    </g>
    <g fill="#ececec"><rect x="2.5" y="25" width="51" height="0.5"/><rect x="2.5" y="37.8" width="51" height="0.5"/><rect x="2.5" y="50.6" width="51" height="0.5"/><rect x="2.5" y="63.4" width="51" height="0.5"/><rect x="2.5" y="76.2" width="51" height="0.5"/></g>
    <circle cx="46" cy="81.5" r="4.4" fill="#c6c6c6"/><path d="M44.5 81.5 h3 M46 80 v3" stroke="#f4f4f4" stroke-width="0.6"/>
    <rect y="88" width="53.5" height="7" fill="#cbcbcb"/>
    <path d="M12.9 90 v3 l-2.2 -1.5z" fill="#e4e4e4"/><circle cx="26.5" cy="91.5" r="1.1" fill="none" stroke="#e4e4e4" stroke-width="0.5"/><rect x="40.5" y="90.4" width="2.2" height="2.2" fill="none" stroke="#e4e4e4" stroke-width="0.5"/>
  </svg>
  <!-- settings dialog thumb (disabled look) -->
  <svg style="left:206.8px;top:102px;" width="53.5" height="95" viewBox="0 0 53.5 95">
    <rect width="53.5" height="95" fill="#d2d2d2"/>
    <rect width="53.5" height="3.4" fill="#c6c6c6"/><rect y="3.4" width="53.5" height="8.8" fill="#cbcbcb"/>
    <rect x="3" y="7" width="9" height="1.4" fill="#d2d2d2"/><circle cx="49.5" cy="7.8" r="0.7" fill="#d6d6d6"/>
    <rect x="3" y="20" width="2" height="1.2" fill="#bcbcbc"/><rect x="3" y="34" width="2" height="1.2" fill="#bcbcbc"/><rect x="3" y="48" width="2" height="1.2" fill="#bcbcbc"/><rect x="3" y="62" width="2" height="1.2" fill="#bcbcbc"/>
    <rect x="6" y="12.8" width="41.4" height="64" fill="#fff"/>
    <rect x="9.5" y="17" width="11.5" height="1.6" fill="#bdbdbd"/>
    <rect x="9.5" y="27.6" width="10" height="1" fill="#d4d4d4"/>
    <rect x="9.5" y="34.6" width="2.6" height="1.6" fill="#bdbdbd"/><rect x="15.5" y="35.1" width="27" height="0.6" fill="#cfcfcf"/><circle cx="24" cy="35.4" r="1.2" fill="#b4b4b4"/>
    <rect x="9.5" y="42" width="10" height="1" fill="#d4d4d4"/>
    <circle cx="10.8" cy="49.6" r="1.3" fill="none" stroke="#bdbdbd" stroke-width="0.6"/><rect x="15.5" y="49.3" width="27" height="0.6" fill="#cfcfcf"/><circle cx="28.5" cy="49.6" r="1.2" fill="#b4b4b4"/>
    <rect x="9.5" y="56.4" width="9" height="1" fill="#d4d4d4"/>
    <ellipse cx="10.8" cy="63.8" rx="1.5" ry="1" fill="none" stroke="#bdbdbd" stroke-width="0.6"/><rect x="15.5" y="63.5" width="27" height="0.6" fill="#cfcfcf"/><circle cx="32.5" cy="63.8" r="1.2" fill="#b4b4b4"/>
    <circle cx="4.4" cy="83.6" r="1" fill="none" stroke="#b4b4b4" stroke-width="0.5"/><rect x="9.5" y="83" width="8" height="1.1" fill="#b9b9b9"/>
    <rect y="87.5" width="53.5" height="7.5" fill="#c8c8c8"/>
    <path d="M12.9 90 v3 l-2.2 -1.5z" fill="#dadada"/><circle cx="26.5" cy="91.5" r="1.1" fill="none" stroke="#dadada" stroke-width="0.5"/><rect x="40.5" y="90.4" width="2.2" height="2.2" fill="none" stroke="#dadada" stroke-width="0.5"/>
  </svg>
  <!-- category header -->
  <div class="a" style="left:7.6px;top:239px;width:302px;height:1px;background:#e2e2e2;"></div>
  <div class="a" style="left:7.6px;top:242px;width:302px;height:23px;background:#e9e9e9;"></div>
  <svg style="left:9.4px;top:249.6px;" width="8" height="8"><path d="M7 0.6 L7 7 L0.6 7 Z" fill="#666"/></svg>
  <!-- App Bar icon -->
  <svg style="left:14.6px;top:284.3px;" width="30.4" height="6.8" viewBox="0 0 32 7" preserveAspectRatio="none"><rect y="0" width="32" height="1.6" fill="#00796b"/><rect y="1.6" width="32" height="5" fill="#13a191"/><rect x="2" y="3.6" width="1.8" height="0.8" fill="#d8f2ee"/><rect x="5.6" y="3.4" width="6" height="1.2" fill="#d8f2ee"/><rect x="22.5" y="3.5" width="1.4" height="1.2" fill="#d8f2ee"/><rect x="27" y="3.3" width="0.8" height="1.6" fill="#d8f2ee"/></svg>
  <!-- selected item -->
  <div class="a" style="left:160px;top:267px;width:147px;height:39.5px;background:#fde4dd;border:1px solid #f6b9a3;"></div>
  <svg style="left:170.4px;top:271.4px;" width="18" height="31.6" viewBox="0 0 18 32" preserveAspectRatio="none"><rect width="18" height="17" fill="#ecd0c9"/><rect y="17" width="18" height="15" fill="#fff"/>
    <rect x="2.2" y="21" width="1.6" height="1.6" fill="#5a6fc0"/><rect x="8" y="21" width="1.8" height="1.8" fill="#d9452e"/><rect x="13.6" y="21" width="1.8" height="1.8" fill="#d9452e"/>
    <rect x="2.2" y="27" width="1.6" height="1.6" fill="#48a860"/><rect x="8" y="27" width="1.6" height="1.6" fill="#777"/><rect x="13.6" y="27" width="1.6" height="1.6" fill="#777"/></svg>
  <!-- bottom sheet (list) icon -->
  <svg style="left:20.7px;top:314.8px;" width="17.6" height="24" viewBox="0 0 17.6 24"><rect width="17.6" height="21" fill="#e7e7e7"/><rect x="2.6" y="22.4" width="1" height="0.8" fill="#999"/></svg>
  <span class="t" style="left:53.6px;top:332.8px;font-size:12px;line-height:12px;color:#252423;letter-spacing:-0.1px;">(List)</span>
  <!-- bottom toolbar icon -->
  <svg style="left:164.2px;top:329px;" width="31.5" height="4" viewBox="0 0 33 4" preserveAspectRatio="none"><rect width="33" height="3.8" fill="#7d7d7d"/><g fill="#c9c9c9"><rect x="3" y="1" width="1.6" height="1.4"/><rect x="9.5" y="1" width="1.6" height="1.4"/><rect x="16" y="1" width="1.6" height="1.4"/><rect x="22.5" y="1" width="1.6" height="1.4"/><rect x="29" y="1" width="1.6" height="1.4"/></g></svg>
  <!-- scrollbar -->
  <div class="a" style="left:311px;top:0;width:16px;height:339px;background:#f0f0f0;"></div>
  <div class="a" style="left:311px;top:38px;width:15px;height:22px;background:#cdcdcd;"></div>
  <svg style="left:314px;top:7px;" width="10" height="7"><path d="M1.5 5.3 L5 1.8 L8.5 5.3" fill="none" stroke="#454545" stroke-width="1.9"/></svg>
  <svg style="left:314px;top:326px;" width="10" height="7"><path d="M1.5 1.7 L5 5.2 L8.5 1.7" fill="none" stroke="#454545" stroke-width="1.9"/></svg>
</div>
<!-- download bar -->
<div class="a" style="left:656px;top:594.5px;width:326px;height:18px;background:#dc5a38;"></div>
<svg style="left:966.3px;top:599.5px;" width="12" height="8"><path d="M1.5 6.5 L6 2 L10.5 6.5" fill="none" stroke="#fff" stroke-width="2"/></svg>


<!-- ===== STATUS ===== -->
<div class="a" style="left:625.6px;top:624px;width:39.4px;height:23px;background:#c8c6c4;"></div>
<!-- spell/book icon -->
<svg style="left:84px;top:628px;" width="17" height="15" viewBox="0 0 17 15"><path d="M8 2.4 Q4.6 0.6 1.2 1.6 V11.6 Q4.6 10.6 8 12.4 V2.4 Q11.2 0.6 14.6 1.6 V7" fill="none" stroke="#3b3a39" stroke-width="1"/><path d="M8 12.4 Q9 11.8 10 11.6 M10.2 10.6 L12 12.6 L15.2 8.4" fill="none" stroke="#3b3a39" stroke-width="1"/></svg>
<!-- accessibility icon -->
<svg style="left:247px;top:627px;" width="18" height="16" viewBox="0 0 18 16"><path d="M5.6 2.2 A5.6 5.6 0 0 0 7 13.2" fill="none" stroke="#3b3a39" stroke-width="1" stroke-dasharray="2.2 1.4"/><path d="M6.4 1.4 V7.6 M3.6 6.2 H9.4 M10.4 3 A4.6 4.6 0 0 1 11.6 6.4" fill="none" stroke="#3b3a39" stroke-width="1"/><path d="M10.2 9 L15.6 14.4 M15.6 9 L10.2 14.4" stroke="#3b3a39" stroke-width="1.2"/></svg>
<!-- notes icon -->
<svg style="left:557px;top:626px;" width="18" height="18" viewBox="0 0 18 18"><path d="M1 8.8 H16.8 M1 12.4 H16.8 M1 16 H16.8" stroke="#3b3a39" stroke-width="1"/><path d="M5.8 5 L9 1.8 L12.2 5" fill="none" stroke="#3b3a39" stroke-width="1.1"/></svg>
<!-- normal view -->
<svg style="left:637px;top:628px;" width="17" height="14" viewBox="0 0 17 14"><rect x="0.9" y="1" width="15" height="11.6" fill="none" stroke="#252423" stroke-width="1.1"/><path d="M4.2 1 V12.6 M4.2 9.4 H15.9" stroke="#252423" stroke-width="1"/><rect x="6.6" y="3.4" width="7" height="3.8" fill="none" stroke="#252423" stroke-width="0.9"/></svg>
<!-- sorter -->
<svg style="left:677px;top:628px;" width="16" height="14" viewBox="0 0 16 14"><g fill="none" stroke="#3b3a39" stroke-width="1"><rect x="1" y="1" width="5.4" height="4.6"/><rect x="9.4" y="1" width="5.4" height="4.6"/><rect x="1" y="8.2" width="5.4" height="4.6"/><rect x="9.4" y="8.2" width="5.4" height="4.6"/></g></svg>
<!-- reading view -->
<svg style="left:717px;top:628px;" width="16" height="14" viewBox="0 0 16 14"><path d="M7.6 2 Q4.6 0.6 1.2 1.2 V11.6 Q4.6 11 7.6 12.6 Q10.6 11 14 11.6 V1.2 Q10.6 0.6 7.6 2 V12.6" fill="none" stroke="#3b3a39" stroke-width="1"/><path d="M3 3.6 H6 M3 5.6 H6 M3 7.6 H6 M3 9.4 H6 M9.2 3.6 H12.2 M9.2 5.6 H12.2 M9.2 7.6 H12.2 M9.2 9.4 H12.2" stroke="#3b3a39" stroke-width="0.8"/></svg>
<!-- slideshow -->
<svg style="left:757px;top:628px;" width="16" height="14" viewBox="0 0 16 14"><path d="M1 1 H14.6 M2.4 1 V7.4 H13.2 V1 M7.8 7.4 V12.6 M4.6 12.6 H11" fill="none" stroke="#3b3a39" stroke-width="1.1"/></svg>
<!-- zoom -->
<div class="a" style="left:791px;top:635px;width:8px;height:1px;background:#3b3a39;"></div>
<div class="a" style="left:804px;top:635px;width:100px;height:1px;background:#8a8886;"></div>
<div class="a" style="left:853px;top:633px;width:1px;height:5px;background:#8a8886;"></div>
<div class="a" style="left:826px;top:630px;width:5px;height:12px;background:#3b3a39;"></div>
<div class="a" style="left:908px;top:635px;width:9px;height:1px;background:#3b3a39;"></div>
<div class="a" style="left:912px;top:631px;width:1px;height:9px;background:#3b3a39;"></div>
<!-- fit -->
<svg style="left:962px;top:626px;" width="18" height="18" viewBox="0 0 18 18"><rect x="5.6" y="5.6" width="6.6" height="6.6" fill="none" stroke="#3b3a39" stroke-width="1.1"/><path d="M6.4 3.4 L8.9 1 L11.4 3.4 M6.4 14.4 L8.9 16.8 L11.4 14.4 M3.4 6.4 L1 8.9 L3.4 11.4 M14.4 6.4 L16.8 8.9 L14.4 11.4" fill="none" stroke="#3b3a39" stroke-width="1.1"/></svg>


<span class="t" style="left:24.20px;top:11.75px;font-size:12.5px;line-height:12.5px;color:#ffffff;letter-spacing:-0.571px;">AutoSave</span>
<span class="t" style="left:100.20px;top:12.50px;font-size:10.4px;line-height:10.4px;color:#ffffff;letter-spacing:-0.700px;">Off</span>
<span class="t" style="left:437.00px;top:11.75px;font-size:12.5px;line-height:12.5px;color:#ffffff;letter-spacing:-0.133px;">PowerMockup.pptx</span>
<span class="t" style="left:692.00px;top:11.75px;font-size:12.5px;line-height:12.5px;color:#ffffff;letter-spacing:-0.417px;">Farshad Iqbal</span>
<span class="t" style="left:17.70px;top:44.50px;font-size:12.8px;line-height:12.8px;color:#3b3a39;letter-spacing:-0.433px;">File</span>
<span class="t" style="left:67.20px;top:44.50px;font-size:12.8px;line-height:12.8px;color:#3b3a39;letter-spacing:0.467px;">Home</span>
<span class="t" style="left:127.40px;top:44.50px;font-size:12.8px;line-height:12.8px;color:#3b3a39;letter-spacing:0.080px;">Insert</span>
<span class="t" style="left:184.10px;top:44.50px;font-size:12.8px;line-height:12.8px;color:#3b3a39;letter-spacing:0.233px;">Draw</span>
<span class="t" style="left:237.20px;top:44.50px;font-size:12.8px;line-height:12.8px;color:#3b3a39;letter-spacing:0.320px;">Design</span>
<span class="t" style="left:301.80px;top:44.50px;font-size:12.8px;line-height:12.8px;color:#3b3a39;letter-spacing:-0.020px;">Transitions</span>
<span class="t" style="left:390.00px;top:44.50px;font-size:12.8px;line-height:12.8px;color:#3b3a39;letter-spacing:0.089px;">Animations</span>
<span class="t" style="left:478.90px;top:44.50px;font-size:12.8px;line-height:12.8px;color:#3b3a39;letter-spacing:-0.022px;">Slide Show</span>
<span class="t" style="left:566.60px;top:44.50px;font-size:12.8px;line-height:12.8px;color:#3b3a39;letter-spacing:-0.360px;">Review</span>
<span class="t" style="left:629.80px;top:44.50px;font-size:12.8px;line-height:12.8px;color:#3b3a39;letter-spacing:-0.333px;">View</span>
<span class="t" style="left:681.00px;top:44.50px;font-size:12.8px;line-height:12.8px;color:#3b3a39;letter-spacing:0.300px;">Add-ins</span>
<span class="t" style="left:748.00px;top:44.50px;font-size:12.8px;line-height:12.8px;color:#3b3a39;letter-spacing:0.600px;">Help</span>
<span class="t" style="left:798.20px;top:44.50px;font-size:12.8px;line-height:12.8px;color:#252423;font-weight:700;letter-spacing:0.030px;">PowerMockup</span>
<span class="t" style="left:30.20px;top:108.00px;font-size:12px;line-height:12px;color:#323130;letter-spacing:-0.133px;">Show</span>
<span class="t" style="left:10.20px;top:124.00px;font-size:12px;line-height:12px;color:#323130;letter-spacing:-0.400px;">Shapes Panel</span>
<span class="t" style="left:91.50px;top:108.00px;font-size:12px;line-height:12px;color:#323130;letter-spacing:0.078px;">Add Online</span>
<span class="t" style="left:84.00px;top:124.00px;font-size:12px;line-height:12px;color:#323130;letter-spacing:-0.267px;">Shape Library</span>
<span class="t" style="left:185.20px;top:108.00px;font-size:12px;line-height:12px;color:#323130;letter-spacing:0.150px;">Add</span>
<span class="t" style="left:179.20px;top:124.00px;font-size:12px;line-height:12px;color:#323130;letter-spacing:-0.300px;">Shape</span>
<span class="t" style="left:218.80px;top:108.00px;font-size:12px;line-height:12px;color:#323130;letter-spacing:0.114px;">Download</span>
<span class="t" style="left:227.30px;top:124.00px;font-size:12px;line-height:12px;color:#323130;letter-spacing:-0.660px;">Shapes</span>
<span class="t" style="left:278.30px;top:108.00px;font-size:12px;line-height:12px;color:#323130;letter-spacing:0.540px;">Import</span>
<span class="t" style="left:277.20px;top:124.00px;font-size:12px;line-height:12px;color:#323130;letter-spacing:-0.640px;">Shapes</span>
<span class="t" style="left:335.50px;top:108.00px;font-size:12px;line-height:12px;color:#323130;letter-spacing:-0.214px;">Buy Full</span>
<span class="t" style="left:338.60px;top:124.00px;font-size:12px;line-height:12px;color:#323130;letter-spacing:-0.333px;">Version</span>
<span class="t" style="left:382.40px;top:108.00px;font-size:12px;line-height:12px;color:#323130;letter-spacing:-0.283px;">Enter License</span>
<span class="t" style="left:404.30px;top:124.00px;font-size:12px;line-height:12px;color:#323130;letter-spacing:-0.033px;">Code</span>
<span class="t" style="left:482.50px;top:108.00px;font-size:12px;line-height:12px;color:#323130;letter-spacing:-0.112px;">Check for</span>
<span class="t" style="left:485.80px;top:124.00px;font-size:12px;line-height:12px;color:#323130;letter-spacing:-0.383px;">Updates</span>
<span class="t" style="left:540.80px;top:108.00px;font-size:12px;line-height:12px;color:#323130;letter-spacing:0.250px;">About</span>
<span class="t" style="left:48.60px;top:146.65px;font-size:11.7px;line-height:11.7px;color:#484644;letter-spacing:-0.355px;">Shapes Panel</span>
<span class="t" style="left:210.60px;top:146.65px;font-size:11.7px;line-height:11.7px;color:#484644;letter-spacing:-0.317px;">Shape Library</span>
<span class="t" style="left:369.70px;top:146.65px;font-size:11.7px;line-height:11.7px;color:#484644;letter-spacing:-0.112px;">Licensing</span>
<span class="t" style="left:486.40px;top:146.65px;font-size:11.7px;line-height:11.7px;color:#484644;letter-spacing:-0.010px;">PowerMockup</span>
<span class="t" style="left:657.40px;top:179.05px;font-size:20.5px;line-height:20.5px;color:#b34124;letter-spacing:0.000px;-webkit-text-stroke:0.45px #e6e6e6;">PowerMockup</span>
<span class="t" style="left:794.30px;top:179.05px;font-size:20.5px;line-height:20.5px;color:#b34124;letter-spacing:-0.660px;-webkit-text-stroke:0.45px #e6e6e6;">Shapes</span>
<span class="t" style="left:658.80px;top:211.00px;font-size:12px;line-height:12px;color:#918f8d;font-style:italic;letter-spacing:-0.533px;">Search shapes</span>
<span class="t" style="left:657.60px;top:237.00px;font-size:12px;line-height:12px;color:#d24726;font-weight:700;letter-spacing:-0.200px;">My Shapes</span>
<span class="t" style="left:726.50px;top:237.00px;font-size:12px;line-height:12px;color:#252423;letter-spacing:-0.542px;">Shared Shapes</span>
<span class="t" style="left:705.70px;top:327.00px;font-size:12px;line-height:12px;color:#252423;letter-spacing:-0.064px;">Find Contact</span>
<span class="t" style="left:871.40px;top:327.00px;font-size:12px;line-height:12px;color:#252423;letter-spacing:-0.433px;">Gallery</span>
<span class="t" style="left:723.90px;top:468.00px;font-size:12px;line-height:12px;color:#a6a4a2;letter-spacing:0.175px;">Inbox</span>
<span class="t" style="left:849.50px;top:468.00px;font-size:12px;line-height:12px;color:#a6a4a2;letter-spacing:-0.079px;">Settings Dialog</span>
<span class="t" style="left:677.00px;top:504.00px;font-size:12px;line-height:12px;color:#252423;letter-spacing:-0.111px;">Components</span>
<span class="t" style="left:708.00px;top:538.00px;font-size:12px;line-height:12px;color:#252423;letter-spacing:-0.167px;">App Bar</span>
<span class="t" style="left:857.60px;top:530.00px;font-size:12px;line-height:12px;color:#252423;letter-spacing:-0.145px;">Bottom Sheet</span>
<span class="t" style="left:857.80px;top:546.00px;font-size:12px;line-height:12px;color:#252423;letter-spacing:0.120px;">(Grid)</span>
<span class="t" style="left:707.80px;top:573.00px;font-size:12px;line-height:12px;color:#252423;letter-spacing:-0.164px;">Bottom Sheet</span>
<span class="t" style="left:857.60px;top:581.00px;font-size:12px;line-height:12px;color:#252423;letter-spacing:0.108px;">Bottom Toolbar</span>
<span class="t" style="left:661.00px;top:598.00px;font-size:12px;line-height:12px;color:#ffffff;letter-spacing:-0.091px;text-decoration:underline;">Download More Shapes...</span>
<span class="t" style="left:8.50px;top:630.25px;font-size:11.5px;line-height:11.5px;color:#3b3a39;letter-spacing:-0.027px;">Slide 1 of 1</span>
<span class="t" style="left:115.00px;top:630.25px;font-size:11.5px;line-height:11.5px;color:#3b3a39;letter-spacing:0.000px;">English (United States)</span>
<span class="t" style="left:267.00px;top:630.25px;font-size:11.5px;line-height:11.5px;color:#3b3a39;letter-spacing:-0.040px;">Accessibility: Investigate</span>
<span class="t" style="left:575.90px;top:630.25px;font-size:11.5px;line-height:11.5px;color:#3b3a39;letter-spacing:-0.025px;">Notes</span>
<span class="t" style="left:929.60px;top:630.25px;font-size:11.5px;line-height:11.5px;color:#3b3a39;letter-spacing:-0.900px;">50%</span>
<div class="a frame"></div>

</body></html>
